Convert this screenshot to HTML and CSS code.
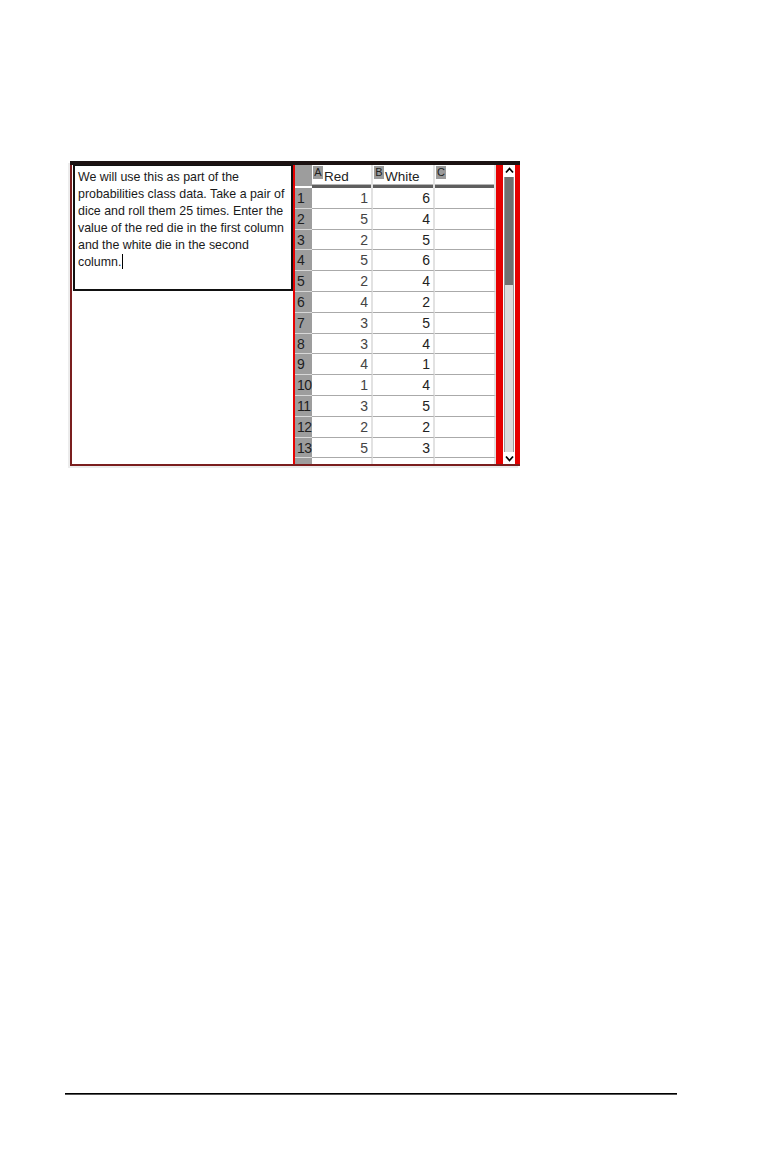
FILE: index.html
```html
<!DOCTYPE html>
<html>
<head>
<meta charset="utf-8">
<link rel="stylesheet" href="styles.css">
</head>
<body>
<div class="page">
  <div class="figure">
    <div class="notes">
      <div class="textbox">We will use this as part of the<br>probabilities class data. Take a pair of<br>dice and roll them 25 times. Enter the<br>value of the red die in the first column<br>and the white die in the second<br>column.<span class="caret"></span></div>
    </div>
    <div class="sheet">
      <div class="grid">
        <div class="corner"></div>
        <div class="hcell"><span class="badge">A</span><span class="hname">Red</span></div>
        <div class="hcell"><span class="badge">B</span><span class="hname">White</span></div>
        <div class="hcell"><span class="badge">C</span></div>

        <div class="rn">1</div><div class="cell a">1</div><div class="cell">6</div><div class="cell"></div>
        <div class="rn">2</div><div class="cell a">5</div><div class="cell">4</div><div class="cell"></div>
        <div class="rn">3</div><div class="cell a">2</div><div class="cell">5</div><div class="cell"></div>
        <div class="rn">4</div><div class="cell a">5</div><div class="cell">6</div><div class="cell"></div>
        <div class="rn">5</div><div class="cell a">2</div><div class="cell">4</div><div class="cell"></div>
        <div class="rn">6</div><div class="cell a">4</div><div class="cell">2</div><div class="cell"></div>
        <div class="rn">7</div><div class="cell a">3</div><div class="cell">5</div><div class="cell"></div>
        <div class="rn">8</div><div class="cell a">3</div><div class="cell">4</div><div class="cell"></div>
        <div class="rn">9</div><div class="cell a">4</div><div class="cell">1</div><div class="cell"></div>
        <div class="rn">10</div><div class="cell a">1</div><div class="cell">4</div><div class="cell"></div>
        <div class="rn">11</div><div class="cell a">3</div><div class="cell">5</div><div class="cell"></div>
        <div class="rn">12</div><div class="cell a">2</div><div class="cell">2</div><div class="cell"></div>
        <div class="rn">13</div><div class="cell a">5</div><div class="cell">3</div><div class="cell"></div>
        <div class="rn part"></div><div class="cell part"></div><div class="cell part"></div><div class="cell part"></div>
      </div>
      <div class="stripe"></div>
      <div class="scroll">
        <div class="arrow up"><svg width="9" height="7" viewBox="0 0 9 7"><path d="M1 5.5 L4.5 1.5 L8 5.5" fill="none" stroke="#000" stroke-width="1.8"/></svg></div>
        <div class="track"><div class="thumb"></div></div>
        <div class="arrow down"><svg width="9" height="7" viewBox="0 0 9 7"><path d="M1 1.5 L4.5 5.5 L8 1.5" fill="none" stroke="#000" stroke-width="1.8"/></svg></div>
      </div>
      <div class="stripe-r"></div>
    </div>
  </div>
  <div class="rule"></div>
</div>
</body>
</html>
```

FILE: styles.css
```css
html, body {
  margin: 0;
  padding: 0;
  background: #ffffff;
}

.page {
  padding-top: 161px;
  font-family: "Liberation Sans", Arial, sans-serif;
}

.figure {
  margin-left: 70px;
  width: 450px;
  height: 305px;
  box-sizing: border-box;
  display: flex;
  border-top: 4px solid #1c1212;
  border-bottom: 2px solid #7a1e1e;
  box-shadow: -2px 2px 0 #ececec;
  background: #ffffff;
}

.notes {
  width: 223px;
  box-sizing: border-box;
  border-left: 2px solid #7a1e1e;
  padding-left: 1px;
  background: #ffffff;
}

.textbox {
  width: 220px;
  height: 126px;
  box-sizing: border-box;
  border: 2px solid #111111;
  border-top-width: 1px;
  padding: 3px 2px 0 3px;
  font-size: 12.4px;
  line-height: 17px;
  color: #1a1a1a;
  white-space: nowrap;
  overflow: hidden;
}

.caret {
  display: inline-block;
  width: 1px;
  height: 15px;
  background: #000;
  vertical-align: -3px;
  margin-left: 1px;
}

.sheet {
  width: 227px;
  box-sizing: border-box;
  border-left: 2px solid #e60000;
  display: flex;
}

.grid {
  width: 201px;
  height: 299px;
  overflow: hidden;
  display: grid;
  grid-template-columns: 17px 61px 62px 61px;
  grid-template-rows: 23px;
  grid-auto-rows: 20.8px;
  font-size: 14px;
  color: #222;
}

.corner {
  background: #9d9d9d;
  border-bottom: 2px solid #ffffff;
}

.hcell {
  position: relative;
  background: #ffffff;
  border-right: 2px solid #e2e2e2;
  box-shadow: inset 0 -3px 0 #5e5e5e, inset 0 -4px 0 #b5b5b5;
  display: flex;
  align-items: flex-end;
  padding-bottom: 4px;
  box-sizing: border-box;
}

.badge {
  position: absolute;
  left: 1px;
  top: 1px;
  width: 10px;
  height: 13px;
  background: #9a9a9a;
  color: #1e1e1e;
  font-size: 11px;
  line-height: 13px;
  text-align: center;
}

.hname {
  margin-left: 12px;
  font-size: 13.5px;
  line-height: 15px;
  color: #222;
}

.rn {
  background: #9d9d9d;
  color: #1e1e1e;
  border-bottom: 1px solid #d8d8d8;
  padding-left: 2px;
  line-height: 20px;
  box-sizing: border-box;
  letter-spacing: -0.5px;
}

.cell {
  border-bottom: 1px solid #aaaaaa;
  border-right: 2px solid #e2e2e2;
  text-align: right;
  padding-right: 3px;
  line-height: 20px;
  box-sizing: border-box;
  background: #fff;
}

.cell.a {
  color: #444;
}

.part {
  border-bottom: 0;
}

.stripe {
  width: 7px;
  background: #e60000;
}

.stripe-r {
  width: 5px;
  background: #e60000;
}

.scroll {
  width: 12px;
  display: flex;
  flex-direction: column;
  background: #ffffff;
}

.arrow {
  height: 11px;
  display: flex;
  align-items: center;
  justify-content: center;
  background: #fff;
}

.track {
  flex: 1;
  background: #dcdcdc;
  border-left: 1px solid #9a9a9a;
  border-right: 1px solid #9a9a9a;
  margin: 1px 1px;
}

.thumb {
  height: 108px;
  background: #707070;
}

.rule {
  margin-top: 627px;
  margin-left: 65px;
  width: 612px;
  height: 1px;
  background: #000;
  border-bottom: 0.5px solid #555;
}
```
